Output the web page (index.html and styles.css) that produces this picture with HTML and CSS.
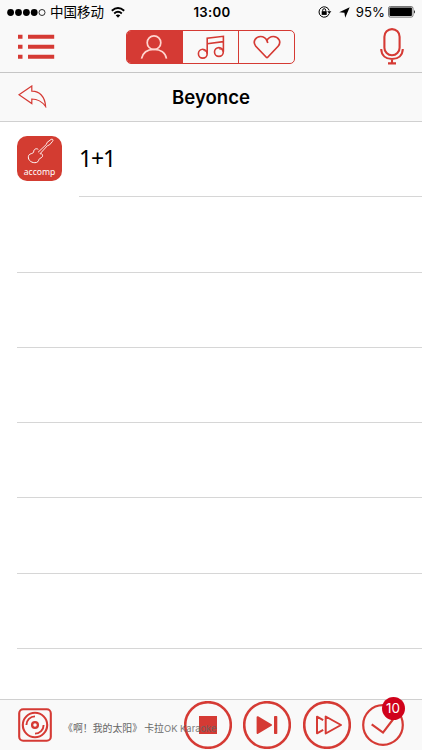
FILE: index.html
```html
<!DOCTYPE html>
<html lang="zh">
	<head>
		<meta charset="utf-8">
		<title>Beyonce</title>
		<link rel="stylesheet" href="styles.css">
	</head>
	<body>
		<header class="top">
			<div class="status">
				<div class="status-left">
					<svg class="signal" width="39" height="9" viewBox="0 0 39 9">
						<circle cx="3.6" cy="4.5" r="3.4"/><circle cx="11.5" cy="4.5" r="3.4"/>
						<circle cx="19.4" cy="4.5" r="3.4"/><circle cx="27.2" cy="4.5" r="3.4"/>
						<circle cx="35" cy="4.5" r="3" fill="none" stroke="#000" stroke-width=".8"/>
					</svg>
					<span class="carrier">中国移动</span>
					<svg width="14" height="11" viewBox="0 0 14 11" fill="none" stroke="#000" stroke-width="1.9">
						<path d="M.8 3.8Q7-1.6 13.2 3.8M3.2 6.5Q7 3.2 10.8 6.5"/>
						<path d="M4.7 8.3Q7 6.5 9.3 8.3L7 10.8Z" fill="#000" stroke="none"/>
					</svg>
				</div>
				<span class="time">13:00</span>
				<div class="status-right">
					<svg width="14" height="12" viewBox="0 0 14 12">
						<path d="M11.2 7.5A5.2 5.2 0 1 1 11.2 4.5" fill="none" stroke="#000"/>
						<path d="M9.2 5.2h4.2l-2.1 2.5z"/>
						<rect x="3.7" y="5.2" width="5" height="3.7"/>
						<path d="M4.7 5.5V4.2a1.5 1.5 0 0 1 3 0v1.3" fill="none" stroke="#000"/>
					</svg>
					<svg class="arrow" width="11" height="11" viewBox="0 0 11 11"><path d="M10.7.2L6.2 10.7 5.4 5.8.2 5.2Z"/></svg>
					<span class="percent">95%</span>
					<svg width="28" height="12" viewBox="0 0 28 12">
						<rect x=".5" y=".5" width="24.5" height="10.6" rx="1.8" fill="none" stroke="#555" stroke-width=".8"/>
						<rect x="1.5" y="1.5" width="22.4" height="8.6" rx=".8"/>
						<path d="M26 3.8q1.8 2 0 4z"/>
					</svg>
				</div>
			</div>
			<div class="toolbar">
				<svg class="menu" width="37" height="26" viewBox="0 0 37 26">
					<path d="M0 2.7h4.5M0 12.7h4.5M0 22.7h4.5M10 2.7h26.2M10 12.7h26.2M10 22.7h26.2" stroke="#d53a34" stroke-width="4"/>
				</svg>
				<div class="tabs">
					<div class="tab current">
						<svg width="28" height="26" viewBox="0 0 28 26" fill="none" stroke="#ffd5cf" stroke-width="1.7">
							<circle cx="14" cy="8.7" r="6.8"/>
							<path d="M1.5 24.7C2.8 18.5 7.6 15.3 14 15.3S25.5 18.5 26.5 24.7"/>
						</svg>
					</div>
					<div class="tab">
						<svg width="28" height="26" viewBox="0 0 28 26" fill="none" stroke="#d53a34" stroke-width="1.6">
							<path d="M10.2 19.5V4.3L26.4 2.3V17.7M10.2 9.8L26.4 7.6"/>
							<circle cx="5.8" cy="19.7" r="4.4"/>
							<circle cx="21.9" cy="18" r="4.4"/>
							<path d="M10 19.5Q9.4 16.3 6.5 16.5M26 17.6Q25.3 14.7 22 14.8" stroke-width="1"/>
						</svg>
					</div>
					<div class="tab">
						<svg width="28" height="26" viewBox="0 0 28 26" fill="none" stroke="#d53a34" stroke-width="1.7">
							<path d="M14 24L2.8 12.3C-.9 7.5 2.8 2.5 7.6 2.5C11 2.5 12.8 4.2 13.9 6.6L14.8 9M13.9 6.6C15.2 3.9 17.4 2.5 20.3 2.5C25.2 2.5 29 7.5 25.1 12.3L14 24"/>
						</svg>
					</div>
				</div>
				<svg class="mic" width="24" height="38" viewBox="0 0 24 38" fill="none" stroke="#d53a34" stroke-width="2.1">
					<rect x="4.4" y="1.1" width="15.2" height="26.2" rx="7.6"/>
					<path d="M1.2 21C1.4 27.5 6 31 12 31S22.6 27.5 22.8 21M12 31V35.4M8 35.4h8"/>
				</svg>
			</div>
		</header>
		<div class="titlebar">
			<svg class="back" width="29" height="23" viewBox="0 0 29 23" fill="none" stroke="#d53a34" stroke-width="1.2">
				<path d="M1 9.8L13.8 1V6.1C21.3 5.9 27 11.6 27.6 21.5C23.8 16.2 19.8 14 13.8 14V18.6Z"/>
			</svg>
			<h1>Beyonce</h1>
		</div>
		<ul class="songs">
			<li class="song">
				<div class="cover">
					<svg width="28" height="29" viewBox="0 0 28 29" fill="none" stroke="#fff">
						<path d="M12.3 13.5C10.2 11.6 7.4 13.6 7.7 16C6.6 18.3 3 17 2.4 20.5C1.8 24.5 6.2 27.5 10.4 26.5C13 25.8 12.3 23.3 14.2 22.2C16.5 21.5 17.5 19.5 15.5 17.7L14.6 18.1"/>
						<path d="M12 16.3L20.3 8.5L21.2 6.3L25.1 3.4C26.7 2.5 27.6 4.2 26.5 5.4L23.6 8.8L21.4 9.7L13.8 18" stroke-width=".9"/>
					</svg>
					<span>accomp</span>
				</div>
				<div class="name">1+1</div>
			</li>
			<li></li>
			<li></li>
			<li></li>
			<li></li>
			<li></li>
			<li></li>
		</ul>
		<footer class="player">
			<svg class="disc" width="34" height="34" viewBox="0 0 34 34" fill="none" stroke="#d53a34" stroke-width="2.1">
				<rect x="1.2" y="1.2" width="31.6" height="31.6" rx="4"/>
				<circle cx="17" cy="17" r="12.2"/>
				<circle cx="17" cy="17" r="2.9" stroke-width="2.3"/>
				<path d="M8.4 17A8.6 8.6 0 0 1 17 8.4M25.6 17A8.6 8.6 0 0 1 17 25.6" stroke-width="1.9"/>
			</svg>
			<span class="playing">《啊！我的太阳》 卡拉<span class="latin">OK Karaoke</span></span>
			<div class="controls">
				<svg width="48" height="48" viewBox="0 0 48 48">
					<circle class="ring" cx="24" cy="24" r="22.8"/>
					<rect x="15" y="15" width="18" height="18" fill="#d53a34"/>
				</svg>
				<svg width="48" height="48" viewBox="0 0 48 48">
					<circle class="ring" cx="24" cy="24" r="22.8"/>
					<path d="M14.6 16.2L28 24L14.6 32Z" fill="#d53a34" stroke="#d53a34" stroke-width="2" stroke-linejoin="round"/>
					<rect x="31" y="15" width="3.3" height="18" rx=".8" fill="#d53a34"/>
				</svg>
				<svg width="48" height="48" viewBox="0 0 48 48">
					<circle class="ring" cx="24" cy="24" r="22.8"/>
					<path d="M20.2 19.2L14 15.7V32.3L20.2 28.8M22.7 15.5V32.5L38 24Z" fill="none" stroke="#d53a34" stroke-width="2" stroke-linejoin="round"/>
				</svg>
				<div class="done">
					<svg width="42" height="42" viewBox="0 0 42 42">
						<circle class="ring thin" cx="21" cy="21" r="19.8"/>
						<path d="M9.7 20.4L21 28.6L34 11.5" fill="none" stroke="#d53a34" stroke-width="2.2"/>
					</svg>
					<span class="badge">10</span>
				</div>
			</div>
		</footer>
	</body>
</html>
```
FILE: styles.css
```css
body {
	margin: 0;
	height: 750px;
	display: flex;
	flex-direction: column;
	overflow: hidden;
	background-color: white;
	color: black;
	font-family: Inter, "Noto Sans CJK SC", sans-serif;
}
svg {
	display: block;
	flex: none;
}
.top {
	height: 72px;
	border-bottom: 1px solid #c6c6c6;
	background-color: #f9f9f9;
}
.status {
	height: 24px;
	display: grid;
	grid-template-columns: 1fr auto 1fr;
	align-items: center;
	padding: 0 6px 0 7px;
}
.status-left, .status-right {
	display: flex;
	align-items: center;
}
.status-right {
	justify-content: flex-end;
}
.carrier {
	margin: -2px 7px 0 4px;
	font: 13.5px/20px "Noto Sans CJK SC", sans-serif;
}
.time {
	padding-left: 1px;
	font-size: 13.2px;
	font-weight: 600;
	letter-spacing: .3px;
}
.arrow {
	margin: 0 6px 0 7px;
}
.percent {
	margin-right: 3px;
	font-size: 13.2px;
}
.toolbar {
	height: 48px;
	display: flex;
	align-items: flex-start;
	justify-content: space-between;
	padding: 0 18px;
}
.menu {
	margin-top: 10px;
}
.tabs {
	width: 167px;
	height: 32px;
	margin: 6px 0 0 -13.5px;
	display: flex;
	border: 1px solid #d53a34;
	border-radius: 5px;
	overflow: hidden;
}
.tab {
	flex: 1;
	display: flex;
	align-items: center;
	justify-content: center;
}
.tab + .tab {
	border-left: 1px solid #d53a34;
}
.tab.current {
	background-color: #d53a34;
}
.tab.current svg {
	margin-right: 2px;
}
.mic {
	margin-top: 4px;
}
.titlebar {
	height: 48px;
	display: grid;
	grid-template-columns: 1fr auto 1fr;
	align-items: center;
	padding: 0 18px;
	border-bottom: 1px solid #d0d0d0;
	background-color: #f9f9f9;
}
.titlebar h1 {
	margin: 0;
	font-size: 18.6px;
	font-weight: 600;
	line-height: 24px;
}
.back {
	margin-bottom: 2px;
}
.songs {
	flex: 1;
	margin: 0;
	padding: 0 0 0 17px;
	list-style: none;
}
.songs li {
	height: 75.25px;
	box-sizing: border-box;
	border-bottom: 1px solid #d6d6d6;
}
.songs .song {
	display: flex;
	border: 0;
}
.cover {
	width: 45px;
	height: 45px;
	margin-top: 14px;
	display: flex;
	flex-direction: column;
	align-items: center;
	border-radius: 10px;
	background-color: #d33c31;
}
.cover span {
	color: white;
	font: 8.6px/14px "Noto Sans", sans-serif;
}
.name {
	flex: 1;
	margin-left: 17px;
	padding-bottom: 28px;
	display: flex;
	align-items: flex-end;
	border-bottom: 1px solid #d6d6d6;
	font: 23px/20px "Noto Sans", sans-serif;
	letter-spacing: -1.2px;
}
.player {
	height: 50px;
	display: flex;
	align-items: center;
	padding-left: 18px;
	border-top: 1px solid #d0d0d0;
	background-color: #f9f9f9;
}
.playing {
	position: relative;
	z-index: 1;
	width: 120px;
	margin: 7px 0 0 11px;
	color: #666;
	font: 9.9px/14px "Noto Sans CJK SC", sans-serif;
	white-space: nowrap;
}
.latin {
	opacity: .85;
	font-family: Inter, sans-serif;
	font-size: 9.4px;
}
.controls {
	display: flex;
	align-items: center;
	gap: 11.7px;
	margin-left: .5px;
}
.ring {
	fill: none;
	stroke: #d53a34;
	stroke-width: 2.6;
}
.ring.thin {
	stroke-width: 2.2;
}
.done {
	position: relative;
	margin-left: -1px;
}
.badge {
	position: absolute;
	top: -7px;
	right: -1px;
	width: 23px;
	height: 23px;
	border-radius: 50%;
	background-color: #d0021b;
	color: white;
	font-size: 13.5px;
	line-height: 23px;
	text-align: center;
}
```
